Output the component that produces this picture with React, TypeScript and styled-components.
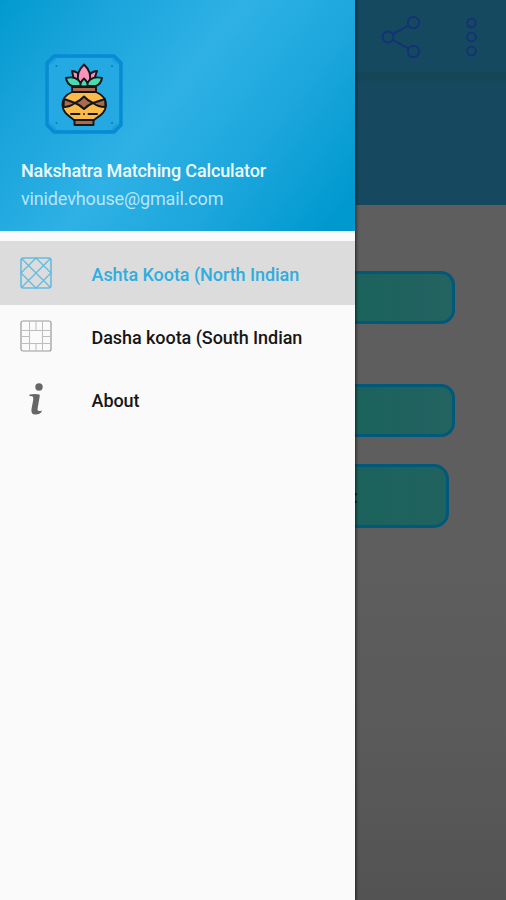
import React from "react";
import styled, { createGlobalStyle } from "styled-components";

const GlobalStyle = createGlobalStyle`
  * { box-sizing: border-box; }
  body { margin: 0; overflow: hidden; font-family: Roboto, "Liberation Sans", sans-serif; }
`;

const Screen = styled.div`
  position: relative;
  width: 506px;
  height: 900px;
  overflow: hidden;
  background: linear-gradient(180deg, #5e5e5e 0%, #5e5e5e 60%, #5a5a5a 82%, #535353 100%);
`;

const Toolbar = styled.header`
  display: flex;
  align-items: center;
  justify-content: flex-end;
  gap: 43px;
  height: 77px;
  padding: 0 28px 3px 0;
  background: linear-gradient(180deg, #15495f 71px, #154658 73px);
`;

const Banner = styled.div`
  height: 128px;
  background: linear-gradient(180deg, #154658 3px, #16495f 6px);
`;

const Form = styled.main`
  display: flex;
  flex-direction: column;
  align-items: flex-end;
  padding: 66px 51px 0;
`;

const Field = styled.div<{ $gap: number }>`
  width: 404px;
  height: 53px;
  margin-bottom: ${(p) => p.$gap}px;
  border: 3px solid #00587a;
  border-radius: 14px;
  background: linear-gradient(90deg, #1b635c 75%, #20625f 92%, #246460 100%);
`;

const Submit = styled.button`
  width: 391px;
  height: 64px;
  margin-right: 6px;
  border: 3px solid #00587a;
  border-radius: 15px;
  background: linear-gradient(90deg, #1b635c 75%, #20625f 100%);
  color: #10191a;
  font: 500 18px Roboto, sans-serif;
  padding: 0 88px 0 0;
  text-align: right;
`;

const Drawer = styled.nav`
  position: absolute;
  inset: 0 auto 0 0;
  width: 355px;
  background: #fafafa;
  box-shadow: 0 0 3px 1px rgba(0, 0, 0, 0.65);
`;

const Profile = styled.div`
  display: flex;
  flex-direction: column;
  height: 231px;
  padding: 53px 20px 0 21px;
  background: linear-gradient(128deg, #029ace 0%, #17a3da 18%, #2fb1e5 46%, #1ba6dc 70%, #0099cf 94%);
`;

const Logo = styled.svg`
  width: 80px;
  height: 82px;
  margin-left: 23px;
  flex: none;
`;

const AppName = styled.div`
  margin-top: 23px;
  height: 26px;
  line-height: 26px;
  font-size: 18px;
  font-weight: 500;
  letter-spacing: -0.15px;
  color: #f0faff;
  white-space: nowrap;
`;

const Email = styled.div`
  height: 28px;
  line-height: 29px;
  font-size: 18px;
  letter-spacing: -0.14px;
  color: #b7e5fa;
`;

const Menu = styled.ul`
  list-style: none;
  margin: 0;
  padding: 10px 0 0;
`;

const Item = styled.li<{ $active?: boolean }>`
  display: flex;
  align-items: center;
  gap: 39.5px;
  height: 64px;
  margin-bottom: -1px;
  padding: 2px 0 0 20px;
  font-size: 18px;
  font-weight: 500;
  letter-spacing: -0.06px;
  white-space: nowrap;
  color: ${(p) => (p.$active ? "#2eade0" : "#161616")};
  background: ${(p) => (p.$active ? "#dcdcdc" : "transparent")};
`;

const Glyph = styled.svg`
  width: 32px;
  height: 32px;
  flex: none;
  margin-top: -3px;
`;

const ShareIcon = () => (
  <svg width="40" height="44" viewBox="0 0 40 44" fill="none" stroke="#15307a" strokeWidth="1.8">
    <circle cx="7" cy="22" r="5.5" />
    <circle cx="32.5" cy="7.5" r="5.7" />
    <circle cx="32.5" cy="36.5" r="5.7" />
    <path d="M12 19 27.5 10.5M12 25 27.5 33.5" />
  </svg>
);

const MoreIcon = () => (
  <svg width="14" height="42" viewBox="0 0 14 42" fill="none" stroke="#15307a" strokeWidth="1.8">
    <circle cx="7.500" cy="7" r="4.3" />
    <circle cx="7.500" cy="21" r="4.3" />
    <circle cx="7.500" cy="35" r="4.3" />
  </svg>
);

const KalashLogo = () => (
  <Logo viewBox="0 0 80 82">
    <path
      d="M10 3H70L77 10V72L70 79H10L3 72V10Z"
      fill="#1b9fde"
      stroke="#078bd3"
      strokeWidth="3.4"
      strokeLinejoin="round"
    />
    <path d="M13 5H67Q69 10 75 12V70Q69 72 67 77H13Q11 72 5 70V12Q11 10 13 5Z" fill="#24a9e2" />
    <g fill="#0a7fc3">
      <circle cx="12.5" cy="13" r="1.1" />
      <circle cx="68" cy="13" r="1.1" />
      <circle cx="12.5" cy="70" r="1.1" />
      <circle cx="68" cy="70" r="1.1" />
    </g>
    <g stroke="#111619" strokeWidth="1.9" strokeLinejoin="round" strokeLinecap="round">
      <path d="M30 27 28 18Q34 18 37 25M50 27 53 18Q47 18 43 25" fill="#f590b5" />
      <path d="M40 11.500Q49 20 45 29H35Q31 20 40 11.500Z" fill="#fc91ba" />
      <path d="M22 25Q34 22 38 33H28Q23 31 22 25ZM58 25Q46 22 42 33H52Q57 31 58 25Z" fill="#4bdbb0" />
      <path d="M40 25.500Q35 30 37 33.500H43Q45 30 40 25.500Z" fill="#4bdbb0" />
      <path d="M28 34H52V39H28Z" fill="#ad694b" />
      <path d="M28 39C21 42 18 47 18.500 52.500C19 60 25 63 30 67H50C55 63 61.500 60 62 52.500C62.500 47 59 42 52 39Z" fill="#fdbb48" />
      <path d="M20 46Q26 48 31 50Q26 54 19.500 54ZM61 46Q55 48 49 50Q54 54 61.500 54Z" fill="#ad694b" />
      <path d="M31 50Q36 48 40 43.500Q44 48 49 50Q44 52 40 56Q36 52 31 50Z" fill="#ad694b" />
      <path d="M27 61H35.500M44.500 61H53M40 61V61.100" fill="none" />
      <path d="M30.500 67H49.500V72H30.500Z" fill="#ad694b" />
    </g>
  </Logo>
);

const NorthIcon = () => (
  <Glyph viewBox="0 0 32 32" fill="none" stroke="#63bce0" strokeWidth="1.25">
    <rect x="1" y="1" width="30" height="30" rx="2.5" strokeWidth="1.6" />
    <path d="M2 2 30 30M30 2 2 30M16 1 31 16 16 31 1 16Z" />
  </Glyph>
);

const SouthIcon = () => (
  <Glyph viewBox="0 0 32 32" fill="none" stroke="#bdbdbd" strokeWidth="1">
    <rect x="1" y="1" width="30" height="30" rx="2" stroke="#999" strokeWidth="1.2" />
    <path d="M1 10.500H31M1 23.500H31M9.500 1V31M22.500 1V31M1 16.500H9.500M22.500 16.500H31M16 1V10.500M16 23.500V31" />
  </Glyph>
);

const InfoIcon = () => (
  <Glyph viewBox="0 0 32 32" fill="#666">
    <circle cx="19" cy="4" r="3.700" />
    <path d="M9.500 11.500Q15 10.500 19.500 11.500Q20 12 19.600 14L17.500 26Q17.300 28 19 28Q20.500 28 22 27.500Q21 31.500 15.500 31.500Q10.500 31.500 11.500 26L13.200 17Q13.700 13.800 12.300 13.300L9.500 13Z" />
  </Glyph>
);

export default function App() {
  return (
    <>
      <GlobalStyle />
      <Screen>
        <Toolbar>
          <ShareIcon />
          <MoreIcon />
        </Toolbar>
        <Banner />
        <Form>
          <Field $gap={60} />
          <Field $gap={27} />
          <Submit>:</Submit>
        </Form>
        <Drawer>
          <Profile>
            <KalashLogo />
            <AppName>Nakshatra Matching Calculator</AppName>
            <Email>vinidevhouse@gmail.com</Email>
          </Profile>
          <Menu>
            <Item $active>
              <NorthIcon />
              Ashta Koota (North Indian
            </Item>
            <Item>
              <SouthIcon />
              Dasha koota (South Indian
            </Item>
            <Item>
              <InfoIcon />
              About
            </Item>
          </Menu>
        </Drawer>
      </Screen>
    </>
  );
}
